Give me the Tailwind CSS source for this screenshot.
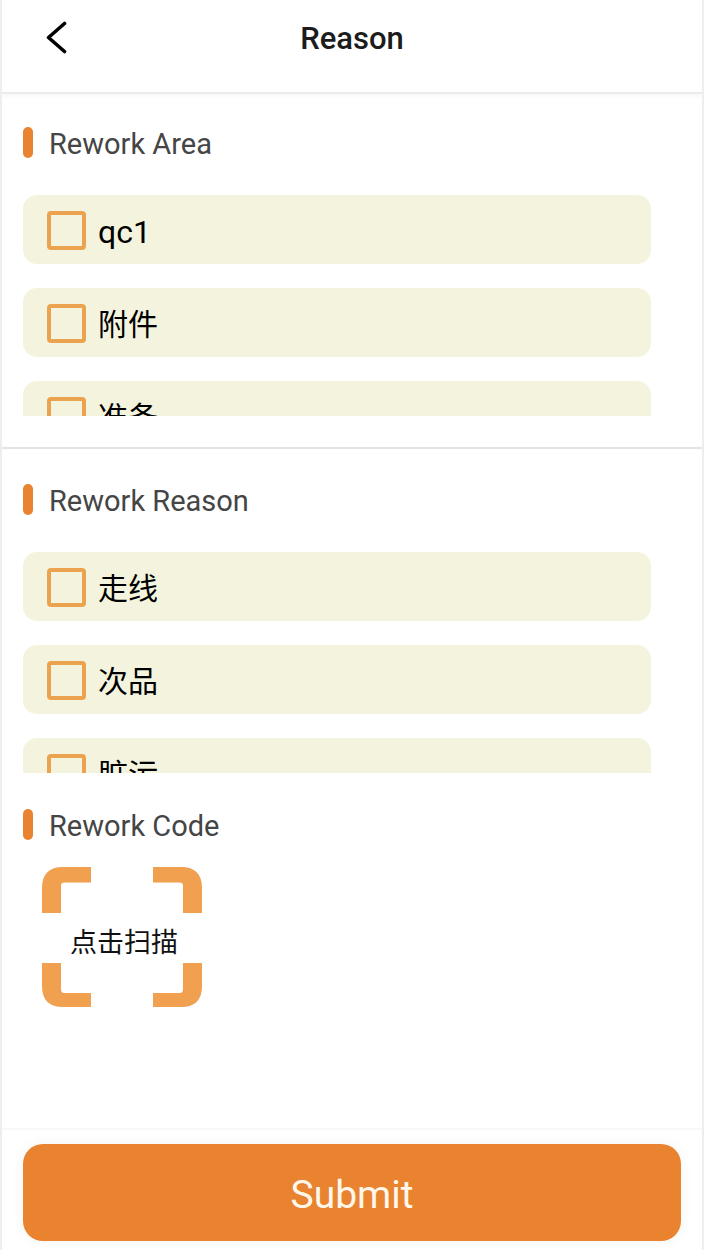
<!DOCTYPE html>
<html lang="zh">
<head>
    <meta charset="UTF-8">
    <meta name="viewport" content="width=device-width, initial-scale=1.0">
    <title>Reason</title>
    <script src="https://cdn.jsdelivr.net/npm/@tailwindcss/browser@4"></script>
</head>
<body class="bg-white font-['Roboto','Noto_Sans_CJK_SC',sans-serif]">
    <div class="w-[704px] h-[1250px] overflow-hidden flex flex-col border-x-2 border-[#eeeeee]">
        <!-- Header -->
        <header class="relative z-10 h-[94px] shrink-0 flex items-start justify-center pt-[20px] border-b-2 border-[#ebebeb] shadow-[0_2px_5px_rgba(0,0,0,0.04)]">
            <svg class="absolute left-[43px] top-[21px]" width="24" height="33" viewBox="0 0 24 33" fill="none">
                <path d="M19.5 2.5 L3.5 16.5 L19.5 30.5" stroke="#000" stroke-width="3.6" stroke-linecap="round" stroke-linejoin="round"/>
            </svg>
            <h1 class="text-[31px] leading-[38px] font-medium text-[#1c1c1c]">Reason</h1>
        </header>

        <!-- Rework Area -->
        <section class="h-[355px] shrink-0 border-b-2 border-[#e4e4e4] px-[21px] pt-[32px]">
            <div class="flex items-center gap-[16px] h-[32px]">
                <span class="w-[10px] h-[31px] rounded-full bg-[#e98330]"></span>
                <h2 class="text-[29px] pt-[6px] text-[#454545]">Rework Area</h2>
            </div>
            <div class="mt-[37px] h-[221px] overflow-hidden flex flex-col gap-[24px] w-[628px]">
                <div class="h-[69px] shrink-0 rounded-[14px] bg-[#f4f4de] flex items-center pl-[24px] gap-[12px]">
                    <span class="w-[39px] h-[39px] mt-[2px] rounded-[4px] border-[4px] border-[#eba350]"></span>
                    <span class="text-[32px] pt-[4px] text-black">qc1</span>
                </div>
                <div class="h-[69px] shrink-0 rounded-[14px] bg-[#f4f4de] flex items-center pl-[24px] gap-[12px]">
                    <span class="w-[39px] h-[39px] mt-[2px] rounded-[4px] border-[4px] border-[#eba350]"></span>
                    <span class="text-[30px] pt-[4px] text-black">附件</span>
                </div>
                <div class="h-[69px] shrink-0 rounded-[14px] bg-[#f4f4de] flex items-center pl-[24px] gap-[12px]">
                    <span class="w-[39px] h-[39px] mt-[2px] rounded-[4px] border-[4px] border-[#eba350]"></span>
                    <span class="text-[30px] pt-[4px] text-black">准备</span>
                </div>
            </div>
        </section>

        <!-- Rework Reason -->
        <section class="h-[325px] shrink-0 px-[21px] pt-[34px]">
            <div class="flex items-center gap-[16px] h-[32px]">
                <span class="w-[10px] h-[31px] rounded-full bg-[#e98330]"></span>
                <h2 class="text-[29px] pt-[6px] text-[#454545]">Rework Reason</h2>
            </div>
            <div class="mt-[37px] h-[221px] overflow-hidden flex flex-col gap-[24px] w-[628px]">
                <div class="h-[69px] shrink-0 rounded-[14px] bg-[#f4f4de] flex items-center pl-[24px] gap-[12px]">
                    <span class="w-[39px] h-[39px] mt-[2px] rounded-[4px] border-[4px] border-[#eba350]"></span>
                    <span class="text-[30px] pt-[4px] text-black">走线</span>
                </div>
                <div class="h-[69px] shrink-0 rounded-[14px] bg-[#f4f4de] flex items-center pl-[24px] gap-[12px]">
                    <span class="w-[39px] h-[39px] mt-[2px] rounded-[4px] border-[4px] border-[#eba350]"></span>
                    <span class="text-[30px] pt-[4px] text-black">次品</span>
                </div>
                <div class="h-[69px] shrink-0 rounded-[14px] bg-[#f4f4de] flex items-center pl-[24px] gap-[12px]">
                    <span class="w-[39px] h-[39px] mt-[2px] rounded-[4px] border-[4px] border-[#eba350]"></span>
                    <span class="text-[30px] pt-[4px] text-black">脏污</span>
                </div>
            </div>
        </section>

        <!-- Rework Code -->
        <section class="flex-1 px-[21px] pt-[34px]">
            <div class="flex items-center gap-[16px] h-[32px]">
                <span class="w-[10px] h-[31px] rounded-full bg-[#e98330]"></span>
                <h2 class="text-[29px] pt-[6px] text-[#454545]">Rework Code</h2>
            </div>
            <div class="relative mt-[27px] ml-[19px] w-[160px] h-[140px]">
                <svg width="160" height="140" viewBox="0 0 160 140" fill="#f0a04f">
                    <path d="M0 46 V21 Q0 0 21 0 H49 V15.5 H22 Q19 15.5 19 19 V46 Z"/>
                    <path d="M160 46 V21 Q160 0 139 0 H111 V15.5 H138 Q141 15.5 141 19 V46 Z"/>
                    <path d="M0 96 V119 Q0 140 21 140 H49 V126 H22 Q19 126 19 122 V96 Z"/>
                    <path d="M160 96 V119 Q160 140 139 140 H111 V126 H138 Q141 126 141 122 V96 Z"/>
                </svg>
                <span class="absolute left-[28px] top-[57px] text-[27px] leading-[38px] text-[#111111] whitespace-nowrap">点击扫描</span>
            </div>
        </section>

        <!-- Submit -->
        <footer class="h-[122px] shrink-0 bg-white border-t-2 border-[#f8f8f8] px-[21px] pt-[14px]">
            <button class="w-[658px] h-[97px] pt-[6px] rounded-[20px] bg-[#e98330] text-[39px] text-[#fff8ea] shadow-[0_0_14px_rgba(0,0,0,0.05)]">Submit</button>
        </footer>
    </div>
</body>
</html>
